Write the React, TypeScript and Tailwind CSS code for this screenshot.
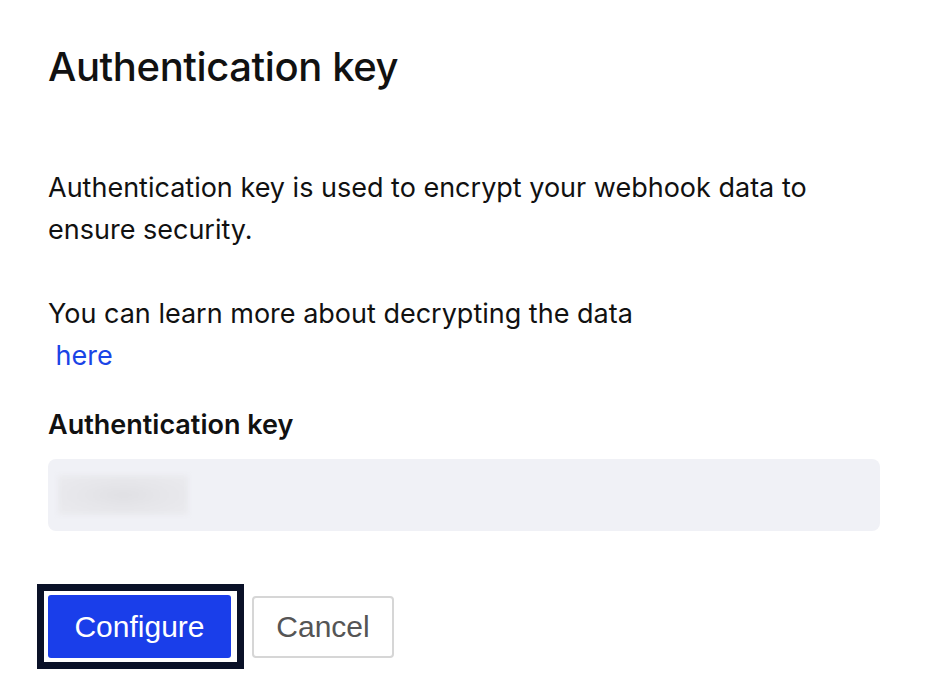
import React from 'react';

export default function App() {
  return (
    <main
      className="min-h-screen bg-white pl-12 pr-[54px] pt-[43px] text-[#111]"
      style={{ fontFamily: 'Inter, "Noto Sans", sans-serif' }}
    >
      <h1 className="text-[40px] font-medium leading-[48px] tracking-[-0.01em]">Authentication key</h1>

      <p className="mt-[76px] text-[27px] leading-[42px]">
        Authentication key is used to encrypt your webhook data to ensure security.
      </p>

      <p className="mt-[42px] text-[27px] leading-[42px]">
        You can learn more about decrypting the data
        <br />
        &nbsp;
        <a href="#" className="text-[#1a44e6]">
          here
        </a>
      </p>

      <label className="mt-[31px] block text-[27px] font-semibold leading-[34px]">
        Authentication key
      </label>

      <div className="mt-[17px] flex h-[72px] items-center rounded-lg bg-[#f0f1f6] px-[10px]">
        <div className="h-10 w-[130px] bg-[#ebebef] blur-[2px]">
          <div className="h-full w-full bg-[radial-gradient(ellipse_at_center,#e0e0e4_0%,#e6e6ea_45%,#ebebef_100%)]" />
        </div>
      </div>

      <div className="mt-[53px] -ml-[11px] flex items-center gap-2" style={{ fontFamily: '"Liberation Sans", Arial, sans-serif' }}>
        <div className="border-[7px] border-[#0a1128] py-1 pl-1 pr-[6px]">
          <button className="block h-[63px] w-[183px] rounded-[3px] bg-[#1a3eea] text-[30px] text-white">
            Configure
          </button>
        </div>
        <button className="h-[62px] w-[142px] rounded-[4px] border-2 border-[#d6d6d6] bg-white text-[30px] text-[#555]">
          Cancel
        </button>
      </div>
    </main>
  );
}
